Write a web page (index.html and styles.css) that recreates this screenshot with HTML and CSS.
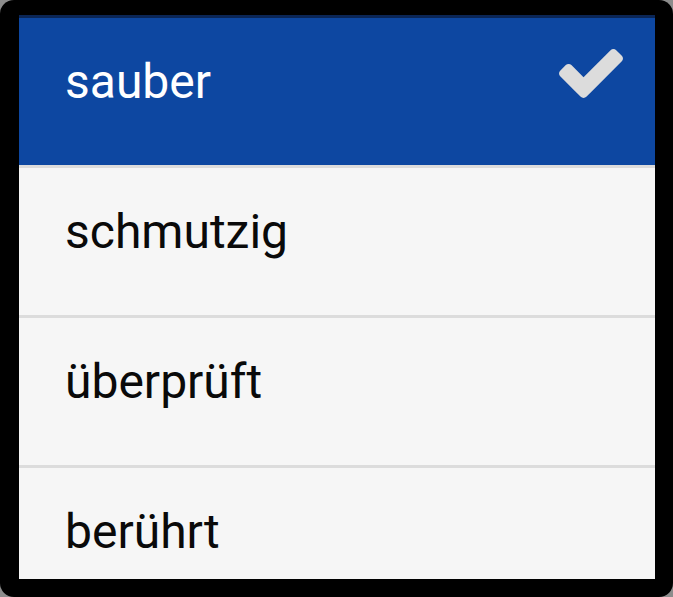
FILE: index.html
```html
<!DOCTYPE html>
<html>
<head>
	<meta charset="UTF-8">
	<title>Auswahl</title>
	<link rel="stylesheet" href="styles.css">
</head>
<body>
	<div class="frame">
		<ul class="choice-list">
			<li class="choice selected">
				<span class="label">sauber</span>
				<svg class="check" width="64" height="49" viewBox="121 334 1550 1188">
					<path d="M1671 566q0 40-28 68l-724 724-136 136q-28 28-68 28t-68-28l-136-136-362-362q-28-28-28-68t28-68l136-136q28-28 68-28t68 28l294 295 656-657q28-28 68-28t68 28l136 136q28 28 28 68z"/>
				</svg>
			</li>
			<li class="choice"><span class="label">schmutzig</span></li>
			<li class="choice"><span class="label">überprüft</span></li>
			<li class="choice"><span class="label">berührt</span></li>
		</ul>
	</div>
</body>
</html>
```

FILE: styles.css
```css
html, body {
	margin: 0;
	padding: 0;
	background: #8c8c8c;
}
body {
	font-family: Roboto, "Noto Sans", sans-serif;
}
.frame {
	width: 673px;
	height: 597px;
	box-sizing: border-box;
	padding: 15px 18px 18px 19px;
	background: #000;
	border-radius: 14px;
}
.choice-list {
	list-style: none;
	margin: 0;
	padding: 0;
	height: 564px;
	overflow: hidden;
	background: #f6f6f6;
}
.choice {
	display: flex;
	justify-content: space-between;
	align-items: flex-start;
	height: 150px;
	box-sizing: border-box;
	padding: 36px 32px 0 46px;
	border-top: 3px solid #dcdcdc;
	background: #f6f6f6;
	color: #0a0a0a;
	font-size: 48px;
	line-height: 56px;
}
.choice.selected {
	background: #0d47a1;
	border-top-color: #0b2656;
	color: #fff;
}
.check {
	margin-top: -5px;
	fill: #dcdcdc;
}
```
